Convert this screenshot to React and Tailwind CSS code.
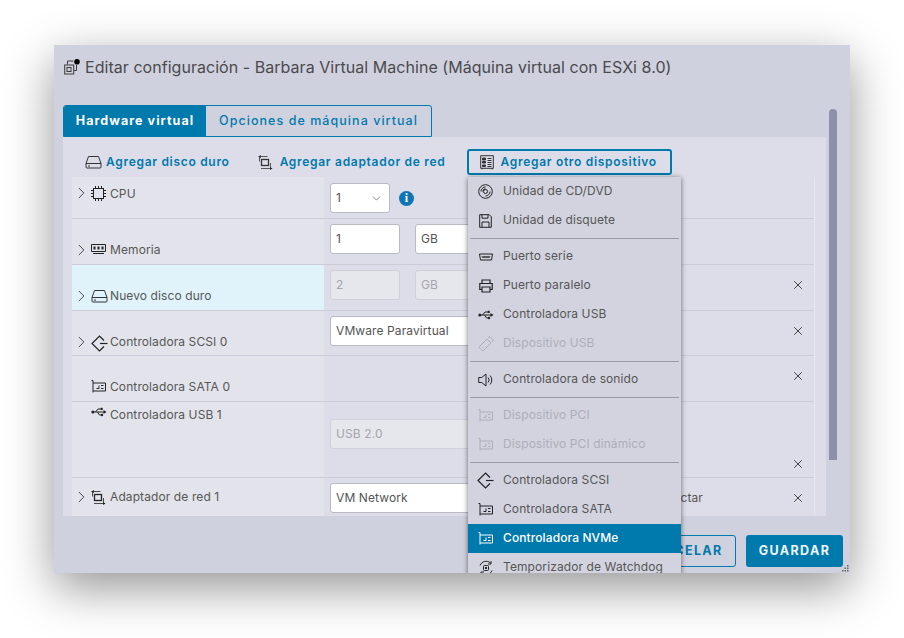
import { ChevronDown, ChevronRight, X } from "lucide-react";

const Ico = ({ children, className = "", w = 16, h = 16, vb = "0 0 16 16" }) => (
  <svg width={w} height={h} viewBox={vb} fill="none" stroke="currentColor" strokeWidth="1" className={`shrink-0 ${className}`}>
    {children}
  </svg>
);

const DiskIcon = ({ className }) => (
  <Ico className={className} w={17} h={14} vb="0 0 17 14">
    <path d="M3.500 1.500h10l2.500 7v3.500a1 1 0 0 1-1 1H2a1 1 0 0 1-1-1V8.500z" />
    <path d="M1 8.500h15M3 11h2" />
  </Ico>
);
const NetIcon = ({ className }) => (
  <Ico className={className} w={15} h={15} vb="0 0 15 15">
    <rect x="3.500" y="4.500" width="7" height="6" strokeWidth="1.300" />
    <path d="M0.500 1.500h9M1.500 1.500v5M3 13.500h11M12.500 8v5" strokeWidth="0.800" />
    <path d="M12 12l2.500 1.500-2.500 1.500zM3 0l-2.500 1.500L3 3z" fill="currentColor" stroke="none" />
  </Ico>
);
const CpuIcon = () => (
  <Ico w={15} h={15} vb="0 0 15 15">
    <rect x="2.500" y="2.500" width="10" height="10" />
    <path d="M4.500 0v2M7.500 0v2M10.500 0v2M4.500 13v2M7.500 13v2M10.500 13v2M0 4.500h2M0 7.500h2M0 10.500h2M13 4.500h2M13 7.500h2M13 10.500h2" />
  </Ico>
);
const RamIcon = () => (
  <Ico w={15} h={12} vb="0 0 15 12">
    <path d="M0.500 1.500h14v7h-14z" />
    <path d="M2.500 3.500h2v3h-2zM6.500 3.500h2v3h-2zM10.500 3.500h2v3h-2z" fill="currentColor" stroke="none" />
    <path d="M2 10.500h11" />
  </Ico>
);
const ScsiIcon = ({ className }) => (
  <Ico className={className} w={17} h={17} vb="0 0 17 17">
    <path d="M13 5.500L8.500 1 1 8.500 8.500 16l4.500-4.500" strokeWidth="1.200" />
    <path d="M9 8.500h7.500" strokeWidth="1.200" />
  </Ico>
);
const SataIcon = ({ className }) => (
  <Ico className={className} w={15} h={13} vb="0 0 15 13">
    <path d="M0.500 0.500h1.500v10.500h12.500V3H2M2 11v1.500" />
    <path d="M8 5.500v3H5.500M10 5.500h2.500M10 8.500h2.500" />
  </Ico>
);
const UsbIcon = ({ className }) => (
  <Ico className={className} w={16} h={10} vb="0 0 16 10">
    <circle cx="1.800" cy="5" r="1.500" fill="currentColor" stroke="none" />
    <path d="M2 5h11M4.500 5l2.500-3h2.500M6.500 5l2 3h2" />
    <path d="M12.500 3l3 2-3 2z" fill="currentColor" stroke="none" />
    <rect x="9.500" y="0.800" width="2.200" height="2.200" fill="currentColor" stroke="none" />
    <circle cx="11" cy="8" r="1.200" fill="currentColor" stroke="none" />
  </Ico>
);
const CdIcon = () => (
  <Ico w={15} h={15} vb="0 0 15 15">
    <circle cx="7.500" cy="7.500" r="6.800" />
    <circle cx="7.500" cy="7.500" r="2" />
    <path d="M3 7.500A4.500 4.500 0 0 1 7.500 3M12 7.500a4.500 4.500 0 0 1-4.500 4.500M4.800 7.500a2.700 2.700 0 0 1 2.700-2.700" />
  </Ico>
);
const FloppyIcon = () => (
  <Ico w={13} h={14} vb="0 0 13 14">
    <path d="M0.700 0.700h9.500l2.100 2.100v10.500H0.700z" />
    <path d="M3 0.700v3.500h6V0.700M3 13.300V8h7v5.300" />
  </Ico>
);
const SerialIcon = () => (
  <Ico w={14} h={8} vb="0 0 14 8">
    <path d="M0.500 1h13l-1 6H1.500z" />
    <path d="M3 3l1 2 1-2 1 2 1-2 1 2 1-2 1 2 1-2" strokeWidth="0.800" />
  </Ico>
);
const PrinterIcon = () => (
  <Ico w={14} h={14} vb="0 0 14 14">
    <path d="M3 4V1h8v3M3 10.500H0.800V4.500h12.400v6H11" strokeWidth="1.200" />
    <path d="M3 8h8v5H3z" strokeWidth="1.200" />
  </Ico>
);
const StickIcon = () => (
  <Ico w={16} h={16} vb="0 0 16 16">
    <path d="M1.500 10.500l7.500-7.500 4 4-7.500 7.500a1 1 0 0 1-1.400 0l-2.600-2.600a1 1 0 0 1 0-1.400z" />
    <path d="M10 2l2-1.500 3.500 3.500L14 6M4.500 11l1 1" />
  </Ico>
);
const SpeakerIcon = () => (
  <Ico w={15} h={14} vb="0 0 15 14">
    <path d="M0.700 4.500h3L8 1v12L3.700 9.500h-3z" />
    <path d="M10 4.500a3.500 3.500 0 0 1 0 5M12 2.500a6.500 6.500 0 0 1 0 9" />
  </Ico>
);
const WatchdogIcon = () => (
  <Ico w={16} h={16} vb="0 0 16 16">
    <path d="M2 5.500A6.500 6.500 0 0 1 12.500 3M14 10.500A6.500 6.500 0 0 1 3.500 13" />
    <path d="M13 1v3h-3M3 15v-3h3" />
    <rect x="5.500" y="5.500" width="5" height="5" rx="1" />
    <rect x="7" y="7" width="2" height="2" fill="currentColor" stroke="none" />
  </Ico>
);
const ListIcon = () => (
  <Ico w={14} h={15} vb="0 0 14 15" className="text-[#333]">
    <path d="M0.700 0.700h12.600v12.600H0.700zM2 13.500v1M12 13.500v1" />
    <path d="M2.500 3h3v2h-3zM2.500 6.500h3v1.500h-3zM2.500 10h3v1.500h-3z" fill="currentColor" />
    <path d="M7.500 3.500h4M7.500 5.500h4M7.500 7.500h4M7.500 9.500h4M7.500 11.500h4" />
  </Ico>
);
const VmIcon = () => (
  <Ico w={16} h={16} vb="0 0 16 16" className="text-[#3a3a3a]">
    <path d="M3.500 5.500V2h6M12.500 6v5.500H10" />
    <rect x="0.700" y="6" width="9" height="9" />
    <rect x="3" y="8.500" width="4" height="4" />
    <circle cx="13" cy="2.800" r="2.800" fill="#000" stroke="none" />
  </Ico>
);

const inputBase = "flex items-center h-[30px] rounded-[3px] border px-[5px] text-[12px] tracking-[0.1px] bg-white border-[#b9bac6] text-[#555]";
const inputOff = "flex items-center h-[30px] rounded-[3px] border px-[5px] text-[12px] tracking-[0.1px] bg-[#e6e7ec] border-[#cfd0da] text-[#a4a5ad]";

const rows = [
  { h: "h-[42px]", pt: "pt-[8px]", chevron: true, icon: <CpuIcon />, label: "CPU", bg: "bg-[#e3e4eb]" },
  { h: "h-[46px]", pt: "pt-[23px]", chevron: true, icon: <RamIcon />, label: "Memoria", bg: "bg-[#e3e4eb]", up: true },
  { h: "h-[46px]", pt: "pt-[23px]", chevron: true, icon: <DiskIcon className="text-[#333]" />, label: "Nuevo disco duro", bg: "bg-[#e0f3fb]", up: true, x: true, xt: "pt-[13px]" },
  { h: "h-[45px]", pt: "pt-[23px]", chevron: true, icon: <ScsiIcon />, label: "Controladora SCSI 0", bg: "bg-[#e3e4eb]", up: true, x: true, xt: "pt-[13px]" },
  { h: "h-[46px]", pt: "pt-[23px]", icon: <SataIcon />, label: "Controladora SATA 0", bg: "bg-[#e3e4eb]", up: true, x: true, xt: "pt-[13px]" },
  { h: "h-[76px]", pt: "pt-[4px]", icon: <UsbIcon />, label: "Controladora USB 1", bg: "bg-[#e3e4eb]", x: true, xt: "pt-[55px]" },
  { h: "h-[38px]", pt: "pt-[11px]", chevron: true, icon: <NetIcon />, label: "Adaptador de red 1", bg: "bg-[#e3e4eb]", up: true, x: true, xt: "pt-[13px]", last: true },
];

const fields = [
  <div className="flex items-center gap-[9px] pt-[6px] pl-[6px]" key="cpu">
    <div className={`${inputBase} w-[60px] justify-between pr-[6px]`}>1<ChevronDown size={13} strokeWidth={1.300} /></div>
    <span className="flex h-[15px] w-[15px] items-center justify-center rounded-full bg-[#0f76b5] text-[12px] font-bold font-['Liberation_Serif',serif] text-white">i</span>
  </div>,
  <div className="flex gap-[15px] pt-[5px] pl-[6px]" key="mem">
    <div className={`${inputBase} w-[70px]`}>1</div>
    <div className={`${inputBase} w-[100px]`}>GB</div>
  </div>,
  <div className="flex gap-[15px] pt-[5px] pl-[6px]" key="disk">
    <div className={`${inputOff} w-[70px]`}>2</div>
    <div className={`${inputOff} w-[100px]`}>GB</div>
  </div>,
  <div className="pt-[5px] pl-[6px]" key="scsi"><div className={`${inputBase} w-[200px]`}>VMware Paravirtual</div></div>,
  null,
  <div className="pt-[17px] pl-[6px]" key="usb"><div className={`${inputOff} w-[200px]`}>USB 2.0</div></div>,
  <div className="flex items-start pt-[5px] pl-[6px]" key="net">
    <div className={`${inputBase} w-[200px]`}>VM Network</div>
    <span className="ml-[120px] pt-[6px] text-[12px] tracking-[0.1px] text-[#565656]">Conectar</span>
  </div>,
];

const menu = [
  { icon: <CdIcon />, label: "Unidad de CD/DVD" },
  { icon: <FloppyIcon />, label: "Unidad de disquete" },
  "sep",
  { icon: <SerialIcon />, label: "Puerto serie" },
  { icon: <PrinterIcon />, label: "Puerto paralelo" },
  { icon: <UsbIcon />, label: "Controladora USB" },
  { icon: <StickIcon />, label: "Dispositivo USB", off: true },
  "sep",
  { icon: <SpeakerIcon />, label: "Controladora de sonido" },
  "sep",
  { icon: <SataIcon />, label: "Dispositivo PCI", off: true },
  { icon: <SataIcon />, label: "Dispositivo PCI dinámico", off: true },
  "sep",
  { icon: <ScsiIcon />, label: "Controladora SCSI" },
  { icon: <SataIcon />, label: "Controladora SATA" },
  { icon: <SataIcon />, label: "Controladora NVMe", active: true },
  { icon: <WatchdogIcon />, label: "Temporizador de Watchdog" },
];

export default function App() {
  return (
    <div className="h-[638px] w-[904px] overflow-hidden bg-white pt-[45px] pl-[54px] font-['Inter',sans-serif] text-[13px]">
      <div className="relative flex h-[528px] w-[796px] flex-col overflow-hidden bg-[#d0d1de] shadow-[0_15px_45px_rgba(0,0,0,0.42)]">
        {/* Title */}
        <div className="flex h-[60px] items-start gap-[5px] pt-[14px] pl-[10px]">
          <VmIcon />
          <h1 className="text-[16px] leading-[16px] font-normal tracking-[0.04px] whitespace-nowrap text-[#4a4a4f]">
            Editar configuración - Barbara Virtual Machine (Máquina virtual con ESXi 8.0)
          </h1>
        </div>

        <div className="flex flex-1 items-start pl-[9px]">
          <div className="flex w-[763px] flex-col">
            {/* Tabs */}
            <div className="flex h-[32px] w-[369px] overflow-hidden rounded-t-[3px] border border-[#0079ad] text-[12.500px] tracking-[1.050px]">
              <div className="flex w-[142px] items-center justify-center bg-[#0079ad] font-bold text-white">Hardware virtual</div>
              <div className="flex flex-1 items-center justify-center font-medium text-[#0079ad]">Opciones de máquina virtual</div>
            </div>

            <div className="h-[379px] overflow-hidden bg-[#dcdde8] pl-[9px]">
              {/* Toolbar */}
              <div className="flex h-[40px] items-center pt-[10px] pl-[13px] text-[12px] font-semibold tracking-[0.700px] whitespace-nowrap text-[#0079ad]">
                <DiskIcon className="mr-[4px] text-[#333]" />
                <span>Agregar disco duro</span>
                <NetIcon className="mr-[7px] ml-[28px] text-[#333]" />
                <span>Agregar adaptador de red</span>
                <div className="ml-[22px] flex h-[26px] w-[205px] items-center gap-[6px] rounded-[3px] border-2 border-[#0079ad] pl-[11px]">
                  <ListIcon />
                  <span>Agregar otro dispositivo</span>
                </div>
              </div>

              {/* Rows */}
              <div className="w-[743px] border-r border-[#e6e6ee]">
                {rows.map((row, i) => (
                  <div key={row.label} className={`flex ${row.h} ${row.last ? "" : "border-b border-[#cbccd8]"}`}>
                    <div className={`flex w-[252px] items-start text-[12px] tracking-[0.1px] text-[#565656] ${row.bg} ${row.pt}`}>
                      <div className="flex h-[16px] w-[19px] shrink-0 items-center justify-center">
                        {row.chevron && <ChevronRight size={20} strokeWidth={1.100} className="text-[#333]" />}
                      </div>
                      <div className="flex w-[19px] shrink-0 justify-start pt-[1px] text-[#222]">{row.icon}</div>
                      <span className={`whitespace-nowrap ${row.up ? "-mt-px" : ""}`}>{row.label}</span>
                    </div>
                    <div className="flex-1">{fields[i]}</div>
                    {row.x && (
                      <div className={`w-[23px] ${row.xt}`}>
                        <X size={14} strokeWidth={1.400} className="text-[#222]" />
                      </div>
                    )}
                  </div>
                ))}
              </div>
            </div>
          </div>

          {/* Scrollbar */}
          <div className="mt-[4px] ml-[3px] h-[351px] w-[8px] rounded-t-[4px] bg-[#8e8fa9]" />
        </div>

        {/* Footer */}
        <div className="flex h-[57px] justify-end gap-[10px] pt-[19px] pr-[7px] text-[12.500px] font-bold tracking-[1.400px]">
          <button className="h-[32px] w-[107px] rounded-[3px] border border-[#0079ad] text-[#0079ad]">CANCELAR</button>
          <button className="h-[32px] w-[97px] rounded-[3px] bg-[#0079ad] text-[#eef6f9]">GUARDAR</button>
        </div>

        {/* Resize grip */}
        <svg width="8" height="8" viewBox="0 0 8 8" className="absolute right-0 bottom-0 text-[#666]" fill="currentColor">
          <rect x="5" y="0" width="1.500" height="1.500" />
          <rect x="2.500" y="2.500" width="1.500" height="1.500" />
          <rect x="5" y="2.500" width="1.500" height="1.500" />
          <rect x="0" y="5" width="1.500" height="1.500" />
          <rect x="2.500" y="5" width="1.500" height="1.500" />
          <rect x="5" y="5" width="1.500" height="1.500" />
        </svg>

        {/* Dropdown menu */}
        <div className="absolute top-[132px] left-[414px] h-[400px] w-[213px] bg-[#d2d3df] text-[12px] tracking-[0.1px] shadow-[0_1px_5px_rgba(0,0,0,0.55)]">
          {menu.map((item, i) =>
            item === "sep" ? (
              <div key={i} className="flex h-[7px] items-center px-[2px]">
                <div className="h-px w-full bg-[#9a9ba6]" />
              </div>
            ) : (
              <div
                key={item.label}
                className={`flex h-[29px] items-center whitespace-nowrap ${
                  item.active ? "bg-[#0079ad] font-medium text-white" : item.off ? "text-[#adaeb8]" : "text-[#565656]"
                }`}
              >
                <div className={`flex w-[35px] shrink-0 justify-center ${item.active ? "text-white" : item.off ? "text-[#adaeb8]" : "text-[#222]"}`}>
                  {item.icon}
                </div>
                <span className="-mt-[2px]">{item.label}</span>
              </div>
            )
          )}
        </div>
      </div>
    </div>
  );
}
